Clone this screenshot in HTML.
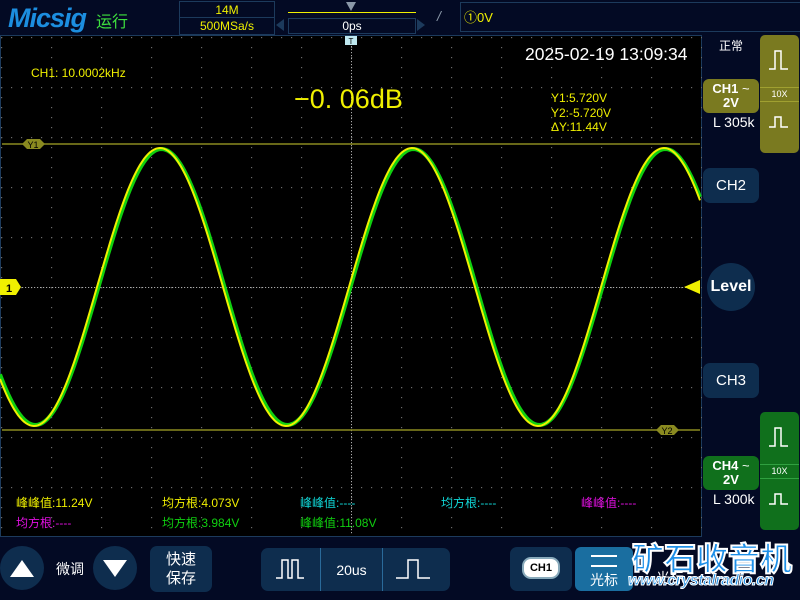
<!DOCTYPE html>
<html><head><meta charset="utf-8"><style>
body{margin:0;width:800px;height:600px;background:#030a24;overflow:hidden;position:relative;font-family:"Liberation Sans","Noto Sans CJK SC",sans-serif}
.a{position:absolute}
.btn{position:absolute;background:#0e2d4e;border-radius:7px;color:#fff;text-align:center}
.y{color:#f0f000}
</style></head><body>
<div class="a" style="left:8px;top:3px;font:italic bold 27px 'Liberation Sans',sans-serif;color:#1c8ee0;letter-spacing:-1px">Micsig</div>
<div class="a" style="left:96px;top:8px;font-size:16px;color:#3ee03e">运行</div>
<div class="a" style="left:179px;top:1px;width:94px;height:32px;border:1px solid #1c3a5c;color:#f0f000;font-size:12px;text-align:center;line-height:16px">14M<br>500MSa/s</div>
<div class="a" style="left:179px;top:17px;width:95px;height:1px;background:#1c3a5c"></div>
<div class="a" style="left:288px;top:12px;width:128px;height:1px;background:#f0f000"></div>
<div class="a" style="left:346px;top:2px;width:0;height:0;border-left:5px solid transparent;border-right:5px solid transparent;border-top:9px solid #8a98a8"></div>
<div class="a" style="left:288px;top:18px;width:126px;height:14px;border:1px solid #1c3a5c;color:#fff;font-size:12px;text-align:center;line-height:14px">0ps</div>
<div class="a" style="left:276px;top:19px;border-top:6px solid transparent;border-bottom:6px solid transparent;border-right:8px solid #1c3a5c"></div>
<div class="a" style="left:417px;top:19px;border-top:6px solid transparent;border-bottom:6px solid transparent;border-left:8px solid #1c3a5c"></div>
<div class="a" style="left:437px;top:8px;color:#8a98a8;font-size:14px;font-style:italic">/</div>
<div class="a" style="left:460px;top:2px;width:340px;height:28px;border:1px solid #1c3a5c;color:#f0f000;font-size:13px;line-height:30px;padding-left:3px">①0V</div>

<svg class="a" style="left:0;top:35px" width="702" height="502">
<rect x="0" y="0" width="702" height="502" fill="#000"/>
<rect x="0.5" y="0.5" width="701" height="501" fill="none" stroke="#1c3a5c"/>
<g id="grid" fill="#6a6a6a"></g>
<line x1="2" y1="109" x2="700" y2="109" stroke="#8a8a20" stroke-width="1.5"/>
<line x1="2" y1="395" x2="700" y2="395" stroke="#8a8a20" stroke-width="1.5"/>
<polygon points="22,109 27,104 40,104 45,109 40,114 27,114" fill="#8a8a20"/>
<text x="33" y="113" font-size="9" fill="#000" text-anchor="middle" font-family="Liberation Sans">Y1</text>
<polygon points="656,395 661,390 674,390 679,395 674,400 661,400" fill="#8a8a20"/>
<text x="667" y="399" font-size="9" fill="#000" text-anchor="middle" font-family="Liberation Sans">Y2</text>
<polyline id="g" fill="none" stroke="#10d010" stroke-width="4"/>
<polyline id="yl" fill="none" stroke="#f0f000" stroke-width="2"/>
<polygon points="0,244 16,244 21,252 16,260 0,260" fill="#f0f000"/>
<text x="6" y="257" font-size="11" font-weight="bold" fill="#000" font-family="Liberation Sans">1</text>
<polygon points="684,252 700,245 700,259" fill="#f0f000"/>
<rect x="345" y="1" width="12" height="9" fill="#bfe8f0"/>
<text x="351" y="9" font-size="8" fill="#000" text-anchor="middle">T</text>
</svg>
<script>
var g=document.getElementById('grid'),s='';
for(var x=1;x<=701;x+=50)for(var y=2;y<500;y+=10)s+='<rect x="'+x+'" y="'+y+'" width="1.2" height="1.2"/>';
for(var y=2;y<=502;y+=50)for(var x=1;x<700;x+=10)s+='<rect x="'+x+'" y="'+y+'" width="1.2" height="1.2"/>';
for(var y=2;y<500;y+=3)s+='<rect x="351" y="'+y+'" width="1" height="1.2" fill="#aaa"/>';
for(var x=1;x<700;x+=3)s+='<rect x="'+x+'" y="252" width="1.2" height="1" fill="#aaa"/>';
g.innerHTML=s;
function pts(dx,a){var p='';for(var x=0;x<=700;x+=2){p+=x+','+(252-a*Math.cos(2*Math.PI*(x-160-dx)/252)).toFixed(1)+' ';}return p;}
document.getElementById('g').setAttribute('points',pts(1.5,138));
document.getElementById('yl').setAttribute('points',pts(0,139));
</script>

<div class="a y" style="left:31px;top:66px;font-size:12px">CH1: 10.0002kHz</div>
<div class="a y" style="left:294px;top:84px;font-size:27px">−0. 06dB</div>
<div class="a" style="left:525px;top:44px;font-size:17.5px;color:#fff">2025-02-19 13:09:34</div>
<div class="a y" style="left:551px;top:91px;font-size:12px;line-height:14.5px">Y1:5.720V<br>Y2:-5.720V<br>ΔY:11.44V</div>

<div class="a" style="left:16px;top:494px;font-size:12px;color:#f0f000">峰峰值:11.24V</div>
<div class="a" style="left:162px;top:494px;font-size:12px;color:#f0f000">均方根:4.073V</div>
<div class="a" style="left:300px;top:494px;font-size:12px;color:#10d8d8">峰峰值:----</div>
<div class="a" style="left:441px;top:494px;font-size:12px;color:#10d8d8">均方根:----</div>
<div class="a" style="left:581px;top:494px;font-size:12px;color:#e010e0">峰峰值:----</div>
<div class="a" style="left:16px;top:514px;font-size:12px;color:#e010e0">均方根:----</div>
<div class="a" style="left:162px;top:514px;font-size:12px;color:#10d010">均方根:3.984V</div>
<div class="a" style="left:300px;top:514px;font-size:12px;color:#10d010">峰峰值:11.08V</div>

<div class="a" style="left:719px;top:37px;font-size:12px;color:#fff">正常</div>
<div class="a" style="left:760px;top:35px;width:39px;height:118px;background:#7a7a20;border-radius:5px"></div>
<div class="a" style="left:760px;top:87px;width:39px;height:1px;background:#a0a030"></div>
<div class="a" style="left:760px;top:101px;width:39px;height:1px;background:#a0a030"></div>
<div class="a" style="left:760px;top:89px;width:39px;font-size:9px;color:#fff;text-align:center">10X</div>
<svg class="a" style="left:768px;top:48px" width="24" height="24"><path d="M1,21H7V3H13V21H20" fill="none" stroke="#fff" stroke-width="1.5"/></svg>
<svg class="a" style="left:768px;top:108px" width="24" height="24"><path d="M1,19H7V9H13V19H20" fill="none" stroke="#fff" stroke-width="1.5"/></svg>
<div class="a" style="left:703px;top:79px;width:56px;height:34px;background:#7a7a20;border-radius:6px;color:#fff;font-weight:bold;font-size:13px;text-align:center;line-height:14px;padding-top:3px;box-sizing:border-box">CH1 <span style="font-weight:normal">~</span><br>2V</div>
<div class="a" style="left:713px;top:114px;font-size:14px;color:#fff">L 305k</div>
<div class="btn" style="left:703px;top:168px;width:56px;height:35px;line-height:35px;font-size:15px">CH2</div>
<div class="a" style="left:707px;top:263px;width:48px;height:48px;border-radius:50%;background:#0e2d4e;color:#fff;font-weight:bold;font-size:16px;text-align:center;line-height:48px">Level</div>
<div class="btn" style="left:703px;top:363px;width:56px;height:35px;line-height:35px;font-size:15px">CH3</div>
<div class="a" style="left:760px;top:412px;width:39px;height:118px;background:#10701c;border-radius:5px"></div>
<div class="a" style="left:760px;top:464px;width:39px;height:1px;background:#30a040"></div>
<div class="a" style="left:760px;top:478px;width:39px;height:1px;background:#30a040"></div>
<div class="a" style="left:760px;top:466px;width:39px;font-size:9px;color:#fff;text-align:center">10X</div>
<svg class="a" style="left:768px;top:425px" width="24" height="24"><path d="M1,21H7V3H13V21H20" fill="none" stroke="#fff" stroke-width="1.5"/></svg>
<svg class="a" style="left:768px;top:485px" width="24" height="24"><path d="M1,19H7V9H13V19H20" fill="none" stroke="#fff" stroke-width="1.5"/></svg>
<div class="a" style="left:703px;top:456px;width:56px;height:34px;background:#10701c;border-radius:6px;color:#fff;font-weight:bold;font-size:13px;text-align:center;line-height:14px;padding-top:3px;box-sizing:border-box">CH4 <span style="font-weight:normal">~</span><br>2V</div>
<div class="a" style="left:713px;top:491px;font-size:14px;color:#fff">L 300k</div>

<div class="a" style="left:0;top:546px;width:44px;height:44px;border-radius:50%;background:#0e2d4e"></div>
<div class="a" style="left:10px;top:560px;border-left:12px solid transparent;border-right:12px solid transparent;border-bottom:17px solid #fff"></div>
<div class="a" style="left:56px;top:559px;font-size:14px;color:#fff">微调</div>
<div class="a" style="left:93px;top:546px;width:44px;height:44px;border-radius:50%;background:#0e2d4e"></div>
<div class="a" style="left:103px;top:560px;border-left:12px solid transparent;border-right:12px solid transparent;border-top:17px solid #fff"></div>
<div class="btn" style="left:150px;top:546px;width:62px;height:46px;font-size:15px;line-height:19px;padding-top:4px;box-sizing:border-box">快速<br>保存</div>
<div class="btn" style="left:261px;top:548px;width:189px;height:43px"></div>
<div class="a" style="left:320px;top:548px;width:1px;height:43px;background:#2a6a9a"></div>
<div class="a" style="left:382px;top:548px;width:1px;height:43px;background:#2a6a9a"></div>
<svg class="a" style="left:274px;top:556px" width="36" height="26"><path d="M2,22H8V4H14V22H18V4H24V22H30" fill="none" stroke="#fff" stroke-width="1.5"/></svg>
<div class="a" style="left:321px;top:562px;width:61px;text-align:center;font-size:14px;color:#fff">20us</div>
<svg class="a" style="left:394px;top:556px" width="40" height="26"><path d="M2,22H14V4H24V22H36" fill="none" stroke="#fff" stroke-width="1.5"/></svg>
<div class="btn" style="left:510px;top:547px;width:62px;height:44px"></div>
<div class="a" style="left:522px;top:557px;width:34px;height:18px;border-radius:9px;background:#fff;border:2px solid #8ab;font-size:11px;font-weight:bold;text-align:center;line-height:18px;color:#000">CH1</div>
<div class="a" style="left:575px;top:547px;width:58px;height:44px;background:#1a6ea0;border-radius:6px;color:#fff;text-align:center;font-size:14px"><div style="margin:8px auto 0;width:26px;height:8px;border-top:2px solid #fff;border-bottom:2px solid #fff"></div><div style="margin-top:3px">光标</div></div>
<div class="a" style="left:656px;top:568px;font-size:14px;color:#fff">光标</div>
<div class="a" style="left:632px;top:534px;font-size:32px;font-weight:bold;color:#1d8fe8;-webkit-text-stroke:2px #fff;letter-spacing:0px">矿石收音机</div>
<div class="a" style="left:628px;top:572px;font-size:16px;font-weight:bold;font-style:italic;color:#1d8fe8;-webkit-text-stroke:1px #fff;letter-spacing:-0.5px">www.crystalradio.cn</div>
</body></html>
